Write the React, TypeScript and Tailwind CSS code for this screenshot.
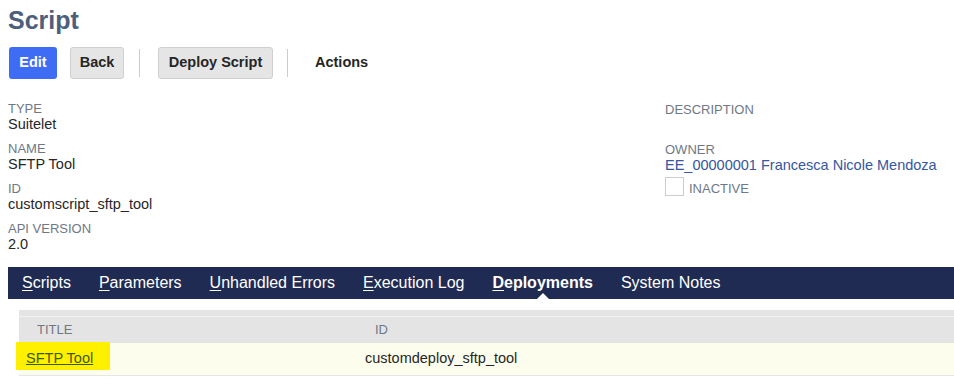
import React from "react";

const Field = ({ label, value, valueClass = "" }: { label: string; value?: string; valueClass?: string }) => (
  <div className="mb-[8px]">
    <div className="h-[15px] leading-[15px] text-[13px] text-[#6f7886] uppercase">{label}</div>
    <div className={`h-[17px] leading-[17px] text-[14.5px] ${valueClass || "text-[#262626]"}`}>{value ?? "\u00a0"}</div>
  </div>
);

const tabs = [
  { first: "S", rest: "cripts" },
  { first: "P", rest: "arameters" },
  { first: "U", rest: "nhandled Errors" },
  { first: "E", rest: "xecution Log" },
  { first: "D", rest: "eployments", active: true },
  { first: "S", rest: "ystem Notes", noUnderline: true },
];

export default function App() {
  return (
    <div
      className="w-[954px] h-[380px] bg-white overflow-hidden relative"
      style={{ fontFamily: '"Liberation Sans", Arial, sans-serif' }}
    >
      <div className="pl-[8px] pt-[6px] h-[34px] text-[25px] leading-[28px] font-bold text-[#4d5f7c]">Script</div>

      <div className="mt-[13px] flex items-center h-[32px] pl-[9px]">
        <button className="h-[32px] w-[48px] rounded-[3px] bg-[#3f6cf5] text-white font-bold text-[14.5px]">Edit</button>
        <button className="ml-[13px] h-[32px] w-[54px] rounded-[3px] bg-[#e5e5e5] border border-[#cfcfcf] text-[#262626] font-bold text-[14.5px]">
          Back
        </button>
        <div className="ml-[15px] w-px h-[28px] bg-[#cccccc]" />
        <button className="ml-[18px] h-[32px] w-[115px] rounded-[3px] bg-[#e5e5e5] border border-[#cfcfcf] text-[#262626] font-bold text-[14.5px]">
          Deploy Script
        </button>
        <div className="ml-[14px] w-px h-[28px] bg-[#cccccc]" />
        <span className="ml-[27px] font-bold text-[14.5px] text-[#262626]">Actions</span>
      </div>

      <div className="mt-[22px] flex h-[166px]">
        <div className="pl-[8px] w-[665px] shrink-0">
          <Field label="Type" value="Suitelet" />
          <Field label="Name" value="SFTP Tool" />
          <Field label="ID" value="customscript_sftp_tool" />
          <Field label="API Version" value="2.0" />
        </div>
        <div className="pt-[1px]">
          <Field label="Description" />
          <div>
            <div className="h-[15px] leading-[15px] text-[13px] text-[#6f7886] uppercase">Owner</div>
            <div className="h-[17px] leading-[17px] text-[14.5px] text-[#3556a3] whitespace-nowrap">EE_00000001 Francesca Nicole Mendoza</div>
          </div>
          <div className="mt-[3px] flex items-end">
            <div className="w-[19px] h-[19px] border border-[#cccccc] bg-white" />
            <span className="ml-[5px] text-[13px] leading-[15px] text-[#6f7886]">INACTIVE</span>
          </div>
        </div>
      </div>

      <div className="ml-[8px] mt-[0px] h-[32px] bg-[#1f2b53] flex items-center relative">
        {tabs.map((t, i) => (
          <div
            key={i}
            className={`relative h-full flex items-center px-[14px] text-[16px] text-white ${t.active ? "font-bold" : ""}`}
          >
            <span>
              <span className={t.noUnderline ? "" : "underline underline-offset-2"}>{t.first}</span>
              {t.rest}
            </span>
            {t.active && (
              <div className="absolute bottom-0 left-1/2 -translate-x-1/2 w-0 h-0 border-l-[6px] border-r-[6px] border-b-[6px] border-l-transparent border-r-transparent border-b-white" />
            )}
          </div>
        ))}
      </div>

      <div className="ml-[19px] mt-[11px]">
        <div className="h-[6px] bg-[#e4e4e4]" />
        <div className="h-px bg-[#f2f2f2]" />
        <div className="h-[26px] bg-[#e4e4e4] flex items-center text-[13px] text-[#6f7886]">
          <div className="w-[339px] pl-[18px]">TITLE</div>
          <div className="pl-[17px]">ID</div>
        </div>
        <div className="h-[33px] bg-[#fcfdec] border-b border-[#e6e6e6] flex items-center text-[14.5px] text-[#262626] relative">
          <div className="w-[339px] pl-[7px] relative">
            <div className="absolute left-[-3px] top-[-6px] w-[94px] h-[28px] bg-[#fff000]" />
            <span className="relative underline text-[#3c5a0c]">SFTP Tool</span>
          </div>
          <div className="pl-[7px]">customdeploy_sftp_tool</div>
        </div>
      </div>
    </div>
  );
}
